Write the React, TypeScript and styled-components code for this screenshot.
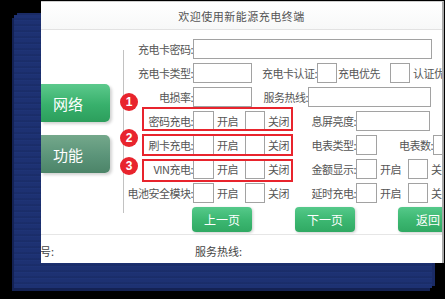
import React from 'react'
import styled, { createGlobalStyle } from 'styled-components'

const GlobalStyle = createGlobalStyle`
  html, body {
    margin: 0;
    padding: 0;
    background: #000;
  }
  body {
    font-family: "Noto Sans CJK SC", "Noto Sans", sans-serif;
  }
`

const Screen = styled.div`
  width: 445px;
  height: 299px;
  background: #000;
  overflow: hidden;
  display: grid;
  grid-template-columns: 445px;
  grid-template-rows: 299px;
`

const Bezel = styled.div`
  grid-area: 1 / 1;
  margin: 15px 13px 11px 14px;
  background: repeating-linear-gradient(
    180deg,
    #1d3172 0px,
    #1d3172 3px,
    #182a63 4px,
    #21377c 6px
  );
  box-shadow: -2px 3px 0 #142254, 3px -2px 0 #1a2b66;
`

const Window = styled.div`
  grid-area: 1 / 1;
  align-self: start;
  justify-self: start;
  margin: 1px 0 0 41px;
  width: 401px;
  height: 261px;
  background: #fff;
  border-top: 1px solid #cfcfcf;
  border-right: 2px solid #a8a8a8;
  overflow: hidden;
  display: flex;
  flex-direction: column;
`

const TitleBar = styled.div`
  height: 27px;
  flex-shrink: 0;
  border-bottom: 1px solid #e2e2e2;
  background: linear-gradient(180deg, #ffffff 0%, #f7f8f8 100%);
  display: flex;
  align-items: center;
  justify-content: center;
  color: #555;
  font-size: 11px;
  letter-spacing: 0.5px;
`

const Body = styled.div`
  height: 204px;
  flex-shrink: 0;
  display: flex;
`

const Sidebar = styled.div`
  width: 69px;
  flex-shrink: 0;
  display: flex;
  flex-direction: column;
  gap: 13px;
  padding-top: 54px;
`

const NavButton = styled.div<{ $active?: boolean }>`
  height: 38px;
  border-radius: 0 5px 5px 0;
  display: flex;
  align-items: center;
  padding-left: 12px;
  color: #fff;
  font-size: 15px;
  background: ${p =>
    p.$active
      ? 'linear-gradient(180deg, #5cc98c 0%, #38b06c 55%, #2c9e5c 100%)'
      : 'linear-gradient(180deg, #74a88b 0%, #5b9479 55%, #4c8468 100%)'};
  box-shadow: 2px 2px 3px rgba(0, 0, 0, 0.18);
`

const Divider = styled.div`
  width: 1px;
  height: 163px;
  margin: 20px 0 0 13px;
  flex-shrink: 0;
  background: #c2c2c2;
`

const Form = styled.div`
  display: flex;
  flex-direction: column;
  gap: 4px;
  margin-top: 9px;
`

const Row = styled.div`
  position: relative;
  display: flex;
  align-items: center;
  height: 20px;
  font-size: 11px;
  letter-spacing: -0.5px;
  color: #555;
  white-space: nowrap;
`

const Label = styled.span<{ $w: number }>`
  width: ${p => p.$w}px;
  flex-shrink: 0;
  text-align: right;
`

const Field = styled.span<{ $w: number }>`
  width: ${p => p.$w}px;
  height: 20px;
  flex-shrink: 0;
  box-sizing: border-box;
  border: 1px solid #a2a2a2;
  background: #fff;
`

const Opt = styled.span<{ $w: number; $pad?: number }>`
  width: ${p => p.$w}px;
  flex-shrink: 0;
  box-sizing: border-box;
  padding-left: ${p => p.$pad ?? 3}px;
`

const Highlight = styled.span<{ $top: number; $h: number }>`
  position: absolute;
  left: 18px;
  top: ${p => p.$top}px;
  width: 151px;
  height: ${p => p.$h}px;
  box-sizing: border-box;
  border: 2px solid #e8242d;
  pointer-events: none;
`

const Badge = styled.span<{ $top: number }>`
  position: absolute;
  left: -4px;
  top: ${p => p.$top}px;
  width: 18px;
  height: 18px;
  border-radius: 50%;
  background: #e8242d;
  color: #fff;
  font-family: "Liberation Sans", Arial, sans-serif;
  font-weight: bold;
  font-size: 12px;
  letter-spacing: 0;
  display: flex;
  align-items: center;
  justify-content: center;
  z-index: 2;
`

const ButtonRow = styled.div`
  display: flex;
  gap: 43px;
  padding-left: 68px;
`

const PageButton = styled.div`
  width: 60px;
  height: 25px;
  flex-shrink: 0;
  border-radius: 4px;
  background: linear-gradient(180deg, #55c98a 0%, #3db872 50%, #30a963 100%);
  box-shadow: 1px 1px 3px rgba(0, 0, 0, 0.2);
  color: #fff;
  font-size: 12px;
  display: flex;
  align-items: center;
  justify-content: center;
`

const Footer = styled.div`
  flex: 1;
  border-top: 1px solid #e6e6e6;
  display: flex;
  align-items: center;
  padding-top: 3px;
  color: #444;
  font-size: 11px;
  white-space: nowrap;
`

const FooterItem = styled.span<{ $w?: number; $offset?: number }>`
  width: ${p => (p.$w ? `${p.$w}px` : 'auto')};
  margin-left: ${p => p.$offset ?? 0}px;
  flex-shrink: 0;
`

const switchRows = [
  { label: '密码充电:', badge: '1', hTop: -4, hH: 24, bTop: -18 },
  { label: '刷卡充电:', badge: '2', hTop: -1, hH: 22, bTop: -6 },
  { label: 'VIN充电:', badge: '3', hTop: 0, hH: 23, bTop: -2 },
]

const OnOff = () => (
  <>
    <Field $w={21} />
    <Opt $w={31}>开启</Opt>
    <Field $w={20} />
    <Opt $w={45}>关闭</Opt>
  </>
)

export default function App() {
  return (
    <Screen>
      <GlobalStyle />
      <Bezel />
      <Window>
        <TitleBar>欢迎使用新能源充电终端</TitleBar>
        <Body>
          <Sidebar>
            <NavButton $active>网络</NavButton>
            <NavButton>功能</NavButton>
          </Sidebar>
          <Divider />
          <Form>
            <Row>
              <Label $w={69}>充电卡密码:</Label>
              <Field $w={239} />
            </Row>
            <Row>
              <Label $w={69}>充电卡类型:</Label>
              <Field $w={59} />
              <Label $w={65}>充电卡认证:</Label>
              <Field $w={20} />
              <Opt $w={53} $pad={1}>充电优先</Opt>
              <Field $w={20} />
              <Opt $w={60}>认证优先</Opt>
            </Row>
            <Row>
              <Label $w={69}>电损率:</Label>
              <Field $w={59} />
              <Label $w={56}>服务热线:</Label>
              <Field $w={123} />
            </Row>
            {switchRows.map((r, i) => (
              <Row key={r.label}>
                <Badge $top={r.bTop}>{r.badge}</Badge>
                <Highlight $top={r.hTop} $h={r.hH} />
                <Label $w={69}>{r.label}</Label>
                <OnOff />
                {i === 0 && (
                  <>
                    <Label $w={46}>息屏亮度:</Label>
                    <Field $w={74} />
                  </>
                )}
                {i === 1 && (
                  <>
                    <Label $w={46}>电表类型:</Label>
                    <Field $w={21} />
                    <Label $w={56}>电表数:</Label>
                    <Field $w={20} />
                  </>
                )}
                {i === 2 && (
                  <>
                    <Label $w={46}>金额显示:</Label>
                    <Field $w={21} />
                    <Opt $w={31}>开启</Opt>
                    <Field $w={20} />
                    <Opt $w={40}>关闭</Opt>
                  </>
                )}
              </Row>
            ))}
            <Row>
              <Label $w={69}>电池安全模块:</Label>
              <OnOff />
              <Label $w={46}>延时充电:</Label>
              <Field $w={21} />
              <Opt $w={31}>开启</Opt>
              <Field $w={20} />
              <Opt $w={40}>关闭</Opt>
            </Row>
            <ButtonRow>
              <PageButton>上一页</PageButton>
              <PageButton>下一页</PageButton>
              <PageButton>返回</PageButton>
            </ButtonRow>
          </Form>
        </Body>
        <Footer>
          <FooterItem $w={166} $offset={-12}>编号:</FooterItem>
          <FooterItem>服务热线:</FooterItem>
        </Footer>
      </Window>
    </Screen>
  )
}
